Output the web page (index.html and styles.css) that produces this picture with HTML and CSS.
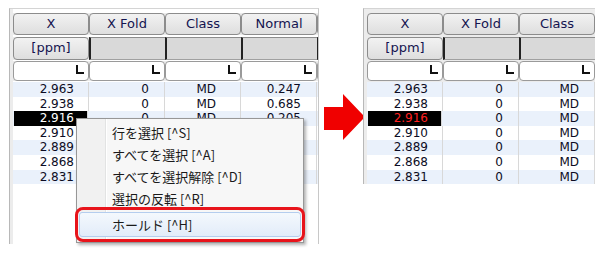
FILE: index.html
```html
<!DOCTYPE html>
<html lang="ja">
<head>
  <meta charset="UTF-8">
  <title>Peak table - hold</title>
  <link rel="stylesheet" href="styles.css">
</head>
<body>

  <div class="scene">

    <!-- Before: table with context menu -->
    <div class="grid-panel grid-panel--cut">
      <div class="hdr-row">
        <div class="hdr-cell">X</div>
        <div class="hdr-cell">X Fold</div>
        <div class="hdr-cell">Class</div>
        <div class="hdr-cell">Normal</div>
        <div class="hdr-cell"></div>
      </div>
      <div class="hdr-row unit-row">
        <div class="hdr-cell">[ppm]</div>
        <div class="unit-blank"></div>
        <div class="unit-blank"></div>
        <div class="unit-blank"></div>
        <div class="unit-blank"></div>
      </div>
      <div class="hdr-row filter-row">
        <div class="filter-cell"></div>
        <div class="filter-cell"></div>
        <div class="filter-cell"></div>
        <div class="filter-cell"></div>
        <div class="filter-cell"></div>
      </div>
      <!-- rows under the menu only show their first column -->
      <div class="data">
        <div class="data-row"><span>2.963</span><span>0</span><span class="cls">MD</span><span>0.247</span><span></span></div>
        <div class="data-row"><span>2.938</span><span>0</span><span class="cls">MD</span><span>0.685</span><span></span></div>
        <div class="data-row"><span class="selected">2.916</span><span>0</span><span class="cls">MD</span><span>0.205</span><span></span></div>
        <div class="data-row"><span>2.910</span><span></span><span></span><span></span><span></span></div>
        <div class="data-row"><span>2.889</span><span></span><span></span><span></span><span></span></div>
        <div class="data-row"><span>2.868</span><span></span><span></span><span></span><span></span></div>
        <div class="data-row"><span>2.831</span><span></span><span></span><span></span><span></span></div>
      </div>
    </div>

    <svg class="arrow" width="44" height="150" viewBox="318 0 44 150">
      <polygon points="323,107 342,107 342,94 364,117 342,140 342,130 323,130" fill="#f00000"/>
    </svg>

    <!-- After: held row -->
    <div class="grid-panel">
      <div class="hdr-row">
        <div class="hdr-cell">X</div>
        <div class="hdr-cell">X Fold</div>
        <div class="hdr-cell">Class</div>
      </div>
      <div class="hdr-row unit-row">
        <div class="hdr-cell">[ppm]</div>
        <div class="unit-blank"></div>
        <div class="unit-blank"></div>
      </div>
      <div class="hdr-row filter-row">
        <div class="filter-cell"></div>
        <div class="filter-cell"></div>
        <div class="filter-cell"></div>
      </div>
      <div class="data">
        <div class="data-row"><span>2.963</span><span>0</span><span>MD</span></div>
        <div class="data-row"><span>2.938</span><span>0</span><span>MD</span></div>
        <div class="data-row"><span class="selected held">2.916</span><span>0</span><span>MD</span></div>
        <div class="data-row"><span>2.910</span><span>0</span><span>MD</span></div>
        <div class="data-row"><span>2.889</span><span>0</span><span>MD</span></div>
        <div class="data-row"><span>2.868</span><span>0</span><span>MD</span></div>
        <div class="data-row"><span>2.831</span><span>0</span><span>MD</span></div>
      </div>
    </div>

    <!-- Context menu -->
    <div class="menu">
      <div class="menu-item">行を選択 [^S]</div>
      <div class="menu-item">すべてを選択 [^A]</div>
      <div class="menu-item">すべてを選択解除 [^D]</div>
      <div class="menu-item">選択の反転 [^R]</div>
      <div class="menu-item menu-item--hover">ホールド [^H]</div>
    </div>
    <div class="callout"></div>

  </div>

</body>
</html>
```

FILE: styles.css
```css
body {
  margin: 0;
  background-color: #fff;
  font-family: "DejaVu Sans", Tahoma, sans-serif;
  font-size: 12px;
}

.scene {
  position: relative;
  width: 600px;
  height: 266px;
  display: flex;
  align-items: flex-start;
}

.grid-panel {
  margin-top: 8px;
  width: 228px;
  padding: 4px 0 0 3px;
  background-color: #ececec;
  border-top: 1px solid #d4d4d4;
  border-left: 1px solid #b8b8b8;
}

.grid-panel--cut {
  margin-left: 9px;
  width: 305px;
  height: 231px;
  overflow: hidden;
  background: linear-gradient(#ececec, #ececec) left / 3px 100% no-repeat, #fff;
  border-right: 1px solid #c8c8c8;
}

.grid-panel--cut .hdr-row,
.grid-panel--cut .data-row {
  grid-template-columns: repeat(5, 76px);
}

.hdr-row {
  display: grid;
  grid-template-columns: repeat(3, 76px);
  height: 22px;
  margin-bottom: 2px;
  background-color: #ececec;
}

.hdr-cell {
  border: 1px solid #8c8c8c;
  border-radius: 4px;
  background: linear-gradient(#f2f2f2, #dedede);
  color: #141450;
  font-size: 13px;
  line-height: 20px;
  text-align: center;
}

.unit-row {
  height: 23px;
  margin-bottom: 1px;
}

.unit-blank {
  background-color: #d9d9d9;
  border-top: 1px solid #8c8c8c;
  border-left: 2px solid #222;
  border-bottom: 1px solid #a0a0a0;
}

.filter-row {
  height: 20px;
  margin-bottom: 1px;
}

.filter-cell {
  position: relative;
  background-color: #fff;
  border: 1px solid #9a9a9a;
  border-radius: 4px;
}

.filter-cell::after {
  content: "";
  position: absolute;
  right: 4px;
  top: 3px;
  width: 6px;
  height: 7px;
  border-left: 2px solid #111;
  border-bottom: 2px solid #111;
}

.data {
  margin-left: -3px;
  padding-left: 3px;
  background: linear-gradient(#ececec, #ececec) left / 3px 100% no-repeat, #fff;
}

.data-row {
  display: grid;
  grid-template-columns: repeat(3, 76px);
  height: 14.6px;
  line-height: 14.6px;
  color: #0c0c24;
}

.data-row:nth-child(odd) {
  background-color: #eaf1fb;
}

.data-row span {
  text-align: right;
  padding-right: 15px;
  border-right: 1px solid #d8d8d8;
}

.data-row span.cls {
  padding-right: 24px;
}

.data-row span:first-child {
  padding-right: 14px;
}

.data-row span.selected {
  background-color: #000;
  color: #fff;
  margin: 0 1px;
  padding-right: 13px;
}

.data-row span.held {
  color: #ff2020;
}

.arrow {
  flex: none;
}

/* context menu */
.menu {
  position: absolute;
  left: 76px;
  top: 118px;
  width: 226px;
  height: 120px;
  padding-top: 3px;
  background: linear-gradient(to right, #f1f1f1 28px, #e2e3e3 28px, #e2e3e3 29px, #fff 29px, #fff 30px, #f7f7f7 30px);
  border: 1px solid #979797;
  box-shadow: 2px 2px 3px rgba(0, 0, 0, 0.3);
  font-family: "Noto Sans CJK JP", sans-serif;
  font-size: 13px;
  color: #1a1a1a;
}

.menu-item {
  height: 22px;
  line-height: 22px;
  padding-left: 35px;
}

.menu-item--hover {
  margin: 2px 2px 0 2px;
  height: 23px;
  line-height: 23px;
  padding-left: 32px;
  border: 1px solid #b4cdee;
  border-radius: 3px;
  background: linear-gradient(#f4f8fd, #e2ecf9);
}

.callout {
  position: absolute;
  left: 75px;
  top: 207px;
  width: 224px;
  height: 29px;
  border: 3px solid #e8141b;
  border-radius: 8px;
}
```
